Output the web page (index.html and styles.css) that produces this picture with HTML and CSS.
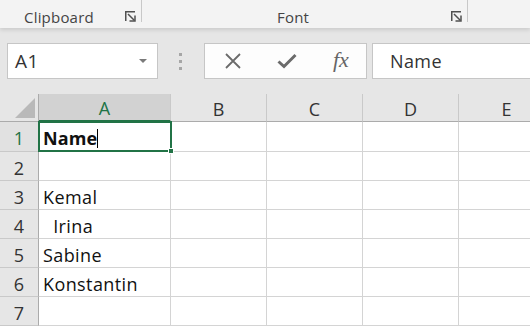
FILE: index.html
```html
<!DOCTYPE html>
<html>
<head>
<meta charset="utf-8">
<link rel="stylesheet" href="styles.css">
</head>
<body>
<div class="ribbon">
  <div class="group g-clip">
    <span class="glabel">Clipboard</span>
    <svg class="launcher" width="11" height="11" viewBox="0 0 11 11"><path d="M0.75 10V0.75H10" fill="none" stroke="#505050" stroke-width="1.5"/><path d="M3 3L9.5 9.5" fill="none" stroke="#505050" stroke-width="1.5"/><path d="M10 4.5V10H4.5" fill="none" stroke="#505050" stroke-width="1.5"/></svg>
  </div>
  <div class="group g-font">
    <span class="glabel">Font</span>
    <svg class="launcher" width="11" height="11" viewBox="0 0 11 11"><path d="M0.75 10V0.75H10" fill="none" stroke="#505050" stroke-width="1.5"/><path d="M3 3L9.5 9.5" fill="none" stroke="#505050" stroke-width="1.5"/><path d="M10 4.5V10H4.5" fill="none" stroke="#505050" stroke-width="1.5"/></svg>
  </div>
</div>
<div class="fbar">
  <div class="namebox">
    <span class="nb-text">A1</span>
    <svg class="nb-arrow" width="8" height="4" viewBox="0 0 8 4"><path d="M0 0H8L4 4Z" fill="#7a7a7a"/></svg>
  </div>
  <div class="grip"><i></i><i></i><i></i></div>
  <div class="fbtns">
    <svg class="ico-x" width="16" height="16" viewBox="0 0 16 16"><path d="M1 1L15 15M15 1L1 15" stroke="#6b6b6b" stroke-width="1.8" fill="none"/></svg>
    <svg class="ico-ok" width="20" height="16" viewBox="0 0 20 16"><path d="M1.5 8.5L7 13.5L18.5 2" stroke="#6b6b6b" stroke-width="3" fill="none"/></svg>
    <span class="fx">fx</span>
  </div>
  <div class="finput">Name</div>
</div>
<div class="sheet">
  <div class="hd corner"><span class="tri"></span></div>
  <div class="hd col sel">A</div>
  <div class="hd col">B</div>
  <div class="hd col">C</div>
  <div class="hd col">D</div>
  <div class="hd col">E</div>

  <div class="hd row sel">1</div>
  <div class="cell bold">Name<span class="caret"></span></div>
  <div class="cell"></div><div class="cell"></div><div class="cell"></div><div class="cell"></div>

  <div class="hd row">2</div>
  <div class="cell"></div><div class="cell"></div><div class="cell"></div><div class="cell"></div><div class="cell"></div>

  <div class="hd row">3</div>
  <div class="cell">Kemal</div><div class="cell"></div><div class="cell"></div><div class="cell"></div><div class="cell"></div>

  <div class="hd row">4</div>
  <div class="cell">&nbsp;&nbsp;Irina</div><div class="cell"></div><div class="cell"></div><div class="cell"></div><div class="cell"></div>

  <div class="hd row">5</div>
  <div class="cell">Sabine</div><div class="cell"></div><div class="cell"></div><div class="cell"></div><div class="cell"></div>

  <div class="hd row">6</div>
  <div class="cell">Konstantin</div><div class="cell"></div><div class="cell"></div><div class="cell"></div><div class="cell"></div>

  <div class="hd row">7</div>
  <div class="cell"></div><div class="cell"></div><div class="cell"></div><div class="cell"></div><div class="cell"></div>

  <div class="selbox"><span class="handle"></span></div>
</div>
</body>
</html>
```

FILE: styles.css
```css
* { box-sizing: border-box; }
html, body { margin: 0; padding: 0; }
body {
  width: 530px;
  height: 326px;
  overflow: hidden;
  background: #e6e6e6;
  font-family: "Open Sans", "Noto Sans", "Liberation Sans", sans-serif;
  color: #222;
}

.ribbon {
  height: 28px;
  background: #f3f3f3;
  display: flex;
  position: relative;
  z-index: 1;
  box-shadow: 0 2px 4px rgba(0, 0, 0, 0.12);
}
.group {
  height: 22px;
  display: flex;
  align-items: center;
  border-right: 1px solid #c8c8c8;
  padding-right: 5px;
}
.g-clip { width: 142px; padding-left: 24px; }
.g-font { width: 326px; padding-left: 135px; }
.glabel {
  font-size: 15px;
  letter-spacing: 0.2px;
  color: #444;
  line-height: 22px;
  padding-top: 11px;
}
.launcher { margin-left: auto; margin-top: 10px; }

.fbar {
  height: 66px;
  display: flex;
  align-items: flex-start;
  padding: 15px 0 0 7px;
}
.namebox {
  width: 151px;
  height: 36px;
  background: #fff;
  border: 1px solid #c6c6c6;
  display: flex;
  align-items: center;
  padding: 0 10px 0 7px;
}
.nb-text { font-size: 19px; letter-spacing: 0.6px; color: #333; }
.nb-arrow { margin-left: auto; }
.grip {
  width: 46px;
  height: 36px;
  display: flex;
  flex-direction: column;
  align-items: center;
  justify-content: center;
  gap: 4px;
  padding-right: 2px;
}
.grip i {
  display: block;
  width: 3px;
  height: 3px;
  background: #a6a6a6;
}
.fbtns {
  width: 163px;
  height: 36px;
  background: #fdfdfd;
  border: 1px solid #c6c6c6;
  display: flex;
  align-items: center;
  padding-left: 20px;
}
.ico-x { margin-right: 36px; }
.ico-ok { margin-right: 36px; }
.fx {
  font-family: "Liberation Serif", serif;
  font-style: italic;
  font-size: 22px;
  color: #666;
  margin-top: -3px;
}
.finput {
  flex: 1;
  height: 36px;
  margin-left: 5px;
  background: #fff;
  border: 1px solid #c6c6c6;
  border-right: none;
  font-size: 18px;
  letter-spacing: 0.4px;
  color: #333;
  line-height: 34px;
  padding-left: 17px;
}

.sheet {
  position: relative;
  background: #fff;
  display: grid;
  grid-template-columns: 39px 132px 96px 96px 96px 96px;
  grid-template-rows: 28px 30px repeat(6, 29px);
}
.hd {
  background: #e6e6e6;
  color: #333;
  font-size: 18px;
  display: flex;
  align-items: center;
  justify-content: center;
}
.corner {
  position: relative;
  border-right: 1px solid #ababab;
  border-bottom: 1px solid #ababab;
}
.tri {
  position: absolute;
  right: 3px;
  bottom: 3px;
  width: 0;
  height: 0;
  border-left: 20px solid transparent;
  border-bottom: 20px solid #b9b9b9;
}
.col {
  border-right: 1px solid #c9c9c9;
  border-bottom: 1px solid #ababab;
  padding-top: 2px;
}
.col.sel {
  background: #d2d2d2;
  color: #217346;
  border-bottom: 2px solid #217346;
}
.row {
  border-right: 1px solid #ababab;
  border-bottom: 1px solid #c9c9c9;
  padding-top: 3px;
}
.row.sel { color: #217346; background: #e1e1e1; }
.cell {
  border-right: 1px solid #d4d4d4;
  border-bottom: 1px solid #d4d4d4;
  font-size: 18px;
  letter-spacing: 0.4px;
  color: #111;
  display: flex;
  align-items: center;
  padding: 3px 0 0 4px;
  white-space: pre;
}
.cell.bold { font-weight: 700; letter-spacing: 0.1px; }
.caret {
  display: inline-block;
  width: 1px;
  height: 19px;
  background: #000;
  margin-left: 0;
}
.selbox {
  position: absolute;
  left: 38px;
  top: 27px;
  width: 134px;
  height: 31px;
  border: 2px solid #217346;
  pointer-events: none;
}
.handle {
  position: absolute;
  right: -4px;
  bottom: -4px;
  width: 6px;
  height: 6px;
  background: #217346;
  border: 1px solid #fff;
}
```
